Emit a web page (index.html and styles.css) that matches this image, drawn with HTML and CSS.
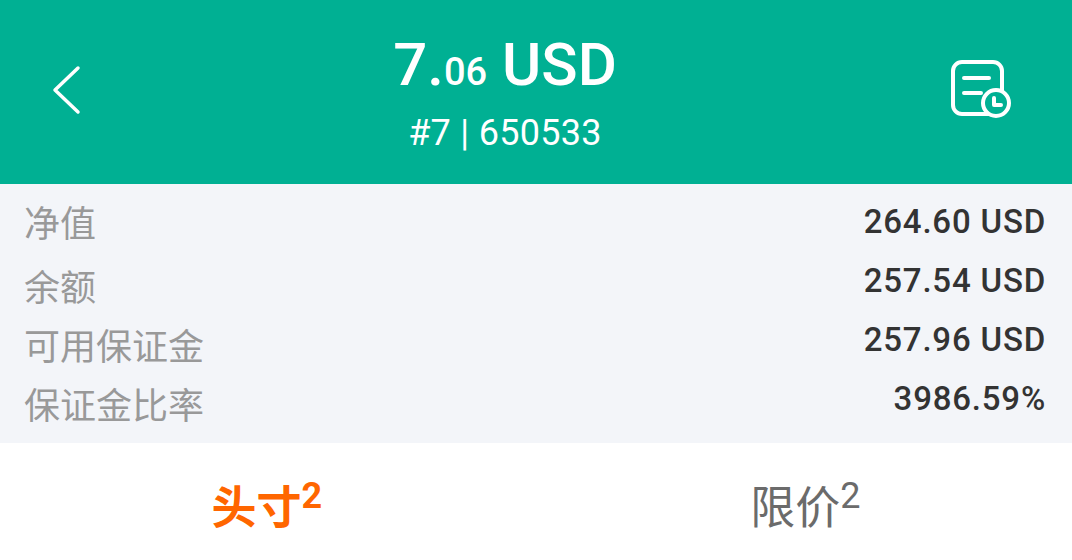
FILE: index.html
```html
<!DOCTYPE html>
<html lang="zh-CN">
<head>
  <meta charset="UTF-8">
  <title>7.06 USD</title>
  <link rel="stylesheet" href="styles.css">
</head>
<body>
  <header class="top">
    <svg class="back" width="30" height="50" viewBox="0 0 30 50"><path d="M26 3 L3 25 L26 47" fill="none" stroke="#fff" stroke-width="3.5" stroke-linecap="round" stroke-linejoin="round"/></svg>
    <div class="title">
      <div class="amount">7.<small>06</small> USD</div>
      <div class="account">#7 | 650533</div>
    </div>
    <svg class="history" width="62" height="60" viewBox="0 0 62 60">
      <rect x="3" y="3" width="49" height="52" rx="9" fill="none" stroke="#fff" stroke-width="4"/>
      <path d="M14 19 H39 M14 34 H31" fill="none" stroke="#fff" stroke-width="4" stroke-linecap="round"/>
      <circle cx="46" cy="44" r="13" fill="#00b093" stroke="#fff" stroke-width="4"/>
      <path d="M44 39 V46 H51" fill="none" stroke="#fff" stroke-width="4" stroke-linecap="round" stroke-linejoin="round"/>
    </svg>
  </header>
  <section class="summary">
    <div class="row"><span class="label">净值</span><span class="value">264.60 USD</span></div>
    <div class="row"><span class="label">余额</span><span class="value">257.54 USD</span></div>
    <div class="row"><span class="label">可用保证金</span><span class="value">257.96 USD</span></div>
    <div class="row"><span class="label">保证金比率</span><span class="value">3986.59%</span></div>
  </section>
  <nav class="tabs">
    <div class="tab active">头寸<sup>2</sup></div>
    <div class="tab">限价<sup>2</sup></div>
  </nav>
</body>
</html>
```

FILE: styles.css
```css
* { box-sizing: border-box; }
html, body { margin: 0; height: 560px; overflow: hidden; }
body { font-family: "Roboto", "Noto Sans CJK SC", sans-serif; background: #fff; }

.top { height: 184px; background: #00b093; color: #fff; display: flex; align-items: center; justify-content: space-between; padding: 0 60px 0 52px; }
.back { margin-bottom: 4px; }
.history { margin-bottom: 6px; }
.title { text-align: center; margin-right: 22px; margin-top: 1px; }
.amount { font-size: 60px; font-weight: 500; line-height: 70px; }
.amount small { font-size: 38px; }
.account { font-size: 36px; line-height: 46px; margin-top: 3px; letter-spacing: 0.3px; }

.summary { height: 259px; background: #f3f5f9; padding: 8px 26px 0 24px; display: flex; flex-direction: column; }
.row { display: flex; justify-content: space-between; align-items: center; height: 59px; }
.label { font-size: 36px; color: #999; margin-bottom: 2px; }
.row + .row .label { margin-top: 8px; margin-bottom: 0; }
.value { font-size: 33px; font-weight: 500; color: #333; letter-spacing: 0.8px; }

.tabs { display: flex; height: 117px; }
.tab { flex: 1; text-align: center; font-size: 45px; line-height: 132px; color: #6b6b6b; }
.tab.active { color: #ff6600; font-weight: 700; padding-right: 5px; }
.tab sup { font-size: 36px; line-height: 0; }
```
